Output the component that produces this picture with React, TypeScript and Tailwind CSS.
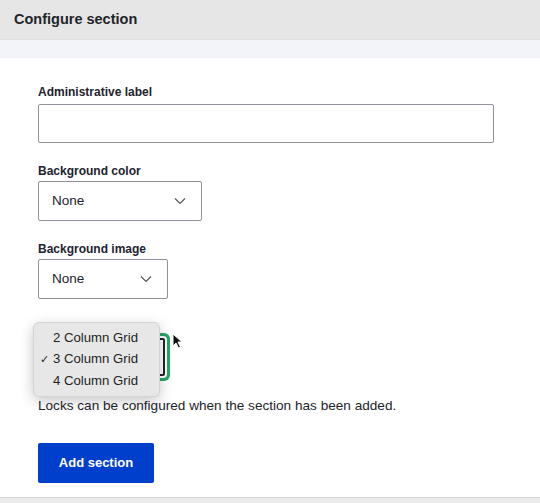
import React from "react";

function Chevron() {
  return (
    <svg width="12" height="8" viewBox="0 0 12 8" fill="none" className="shrink-0">
      <path d="M1 1.5 L6 6.5 L11 1.5" stroke="#545560" strokeWidth="1.2" />
    </svg>
  );
}

function SelectBox({ width }: { width: string }) {
  return (
    <div
      className={`${width} flex h-10 items-center justify-between rounded-[2px] border border-[#8e929c] bg-white pl-[13px] pr-[15px] text-[13.5px] text-[#222330]`}
    >
      <span>None</span>
      <Chevron />
    </div>
  );
}

export default function App() {
  return (
    <div
      className="flex h-[503px] w-[540px] flex-col bg-white text-[#222330]"
      style={{ fontFamily: '"Liberation Sans", Arial, sans-serif' }}
    >
      {/* Dialog title */}
      <div className="flex h-10 items-center border-b border-[#dedfe4] bg-[#e6e6e6] px-[14px]">
        <h1 className="text-[14.5px] font-bold text-[#232429]">Configure section</h1>
      </div>
      <div className="h-[18px] bg-[#f3f4f9]" />

      <div className="flex flex-1 flex-col px-[38px] pt-[25px]">
        <label className="mb-[3px] text-[12px] font-bold leading-[18px]">Administrative label</label>
        <div className="h-[39px] w-[456px] rounded-[2px] border border-[#8e929c] bg-white" />

        <label className="mb-[1px] mt-[19px] text-[12px] font-bold leading-[18px]">Background color</label>
        <SelectBox width="w-[164px]" />

        <label className="mb-[1px] mt-[19px] text-[12px] font-bold leading-[18px]">Background image</label>
        <SelectBox width="w-[130px]" />

        {/* Grid field with open native menu */}
        <div className="relative mt-[19px]">
          <label className="mb-[2px] block text-[12px] font-bold leading-[18px]">Grid layout</label>
          <div className="h-[38px] w-[127px] rounded-[2px] border-2 border-[#222330] bg-white shadow-[0_0_0_2px_#fff,0_0_0_5px_#26a769]" />

          <div className="absolute left-[-5px] top-[4px] w-[127px] rounded-[6px] border border-[#d4d4d4] bg-[#e7e7e7] py-[4px] text-[13.2px] text-[#1f1f1f] shadow-[0_4px_14px_rgba(0,0,0,0.22)]">
            <div className="flex h-[21.5px] items-center pl-[19px]">2 Column Grid</div>
            <div className="relative flex h-[21.5px] items-center pl-[19px]">
              <span className="absolute left-[6px] text-[11px]">✓</span>3 Column Grid
            </div>
            <div className="flex h-[21.5px] items-center pl-[19px]">4 Column Grid</div>
          </div>

          <svg className="absolute left-[134px] top-[15px]" width="12" height="16" viewBox="0 0 12 16">
            <path d="M1 1 L1 13 L4 10 L6.5 15 L8.5 14 L6 9 L10 9 Z" fill="#111" stroke="#fff" strokeWidth="1" />
          </svg>
        </div>

        <p className="mt-[20px] text-[13.6px] leading-[20px] text-[#232429]">
          Locks can be configured when the section has been added.
        </p>

        <button className="mt-[27px] h-10 w-[116px] rounded-[2px] bg-[#003ecc] text-[13px] font-bold text-white">
          Add section
        </button>
      </div>

      <div className="h-[6px] border-t border-[#d3d4d9] bg-[#ececec]" />
    </div>
  );
}
